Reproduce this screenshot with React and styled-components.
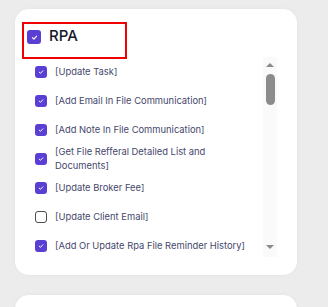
import React from "react";
import styled, { createGlobalStyle } from "styled-components";

const Global = createGlobalStyle`
  html, body { margin: 0; padding: 0; background: #ececec; }
  body { font-family: Inter, "Noto Sans", sans-serif; }
`;

const Page = styled.div`
  padding: 9px 0 0 15px;
  height: 307px;
  box-sizing: border-box;
  overflow: hidden;
`;

const Card = styled.section`
  width: 282px;
  min-height: ${(p) => p.$height}px;
  box-sizing: border-box;
  background: #ffffff;
  border-radius: 14px;
  box-shadow: 0 0 4px rgba(0, 0, 0, 0.04);
  padding: 13px 20px 18px 7px;
  margin-bottom: 20px;
`;

const Header = styled.div`
  width: 105px;
  height: 37px;
  box-sizing: border-box;
  border: 2px solid #f00000;
  padding: 6px 3px;
  margin-bottom: -2px;
  display: flex;
  align-items: flex-start;
  gap: 8px;
`;

const Title = styled.span`
  font-size: 15px;
  font-weight: 500;
  line-height: 14px;
  margin-top: -1px;
  color: #16172b;
`;

const Body = styled.div`
  display: flex;
  height: 200px;
`;

const List = styled.ul`
  flex: 1;
  margin: 0;
  padding: 0;
  list-style: none;
  overflow: hidden;
`;

const Row = styled.li`
  height: 29px;
  display: flex;
  align-items: center;
  gap: 8px;
  padding: 0 8px 0 13px;
`;

const Label = styled.span`
  font-size: 9.4px;
  line-height: 14px;
  color: #45486c;
`;

const Box = styled.span`
  flex: none;
  width: ${(p) => p.$size}px;
  height: ${(p) => p.$size}px;
  box-sizing: border-box;
  border-radius: 3px;
  display: flex;
  align-items: center;
  justify-content: center;
  background: ${(p) => (p.$checked ? "#5b3fd4" : "#ffffff")};
  border: ${(p) => (p.$checked ? "none" : "1px solid #4d4d4d")};
`;

const Rail = styled.div`
  width: 14px;
  background: #fafafa;
  display: flex;
  flex-direction: column;
  align-items: center;
  padding: 6px 0 8px;
  box-sizing: border-box;
`;

const Arrow = styled.span`
  width: 0;
  height: 0;
  border-left: 4px solid transparent;
  border-right: 4px solid transparent;
  ${(p) =>
    p.$down
      ? "border-top: 4px solid #8a8a8a; margin-top: auto;"
      : "border-bottom: 4px solid #8a8a8a;"}
`;

const Thumb = styled.span`
  width: 9px;
  height: 31px;
  margin-top: 7px;
  border-radius: 5px;
  background: #8c8c8c;
`;

function Check({ checked = true, size = 12 }) {
  return (
    <Box $checked={checked} $size={size}>
      {checked && (
        <svg width={size * 0.5} height={size * 0.5} viewBox="0 0 10 10">
          <path
            d="M2 5.2 L4.2 7.2 L8 3"
            fill="none"
            stroke="#ffffff"
            strokeWidth="1.6"
            strokeLinecap="round"
            strokeLinejoin="round"
          />
        </svg>
      )}
    </Box>
  );
}

const items = [
  { label: "[Update Task]", checked: true },
  { label: "[Add Email In File Communication]", checked: true },
  { label: "[Add Note In File Communication]", checked: true },
  { label: "[Get File Refferal Detailed List and Documents]", checked: true },
  { label: "[Update Broker Fee]", checked: true },
  { label: "[Update Client Email]", checked: false },
  { label: "[Add Or Update Rpa File Reminder History]", checked: true },
];

export default function App() {
  return (
    <>
      <Global />
      <Page>
        <Card $height={266}>
          <Header>
            <Check checked size={14} />
            <Title>RPA</Title>
          </Header>
          <Body>
            <List>
              {items.map((it) => (
                <Row key={it.label}>
                  <Check checked={it.checked} />
                  <Label>{it.label}</Label>
                </Row>
              ))}
            </List>
            <Rail>
              <Arrow />
              <Thumb />
              <Arrow $down />
            </Rail>
          </Body>
        </Card>
        <Card $height={40} />
      </Page>
    </>
  );
}
